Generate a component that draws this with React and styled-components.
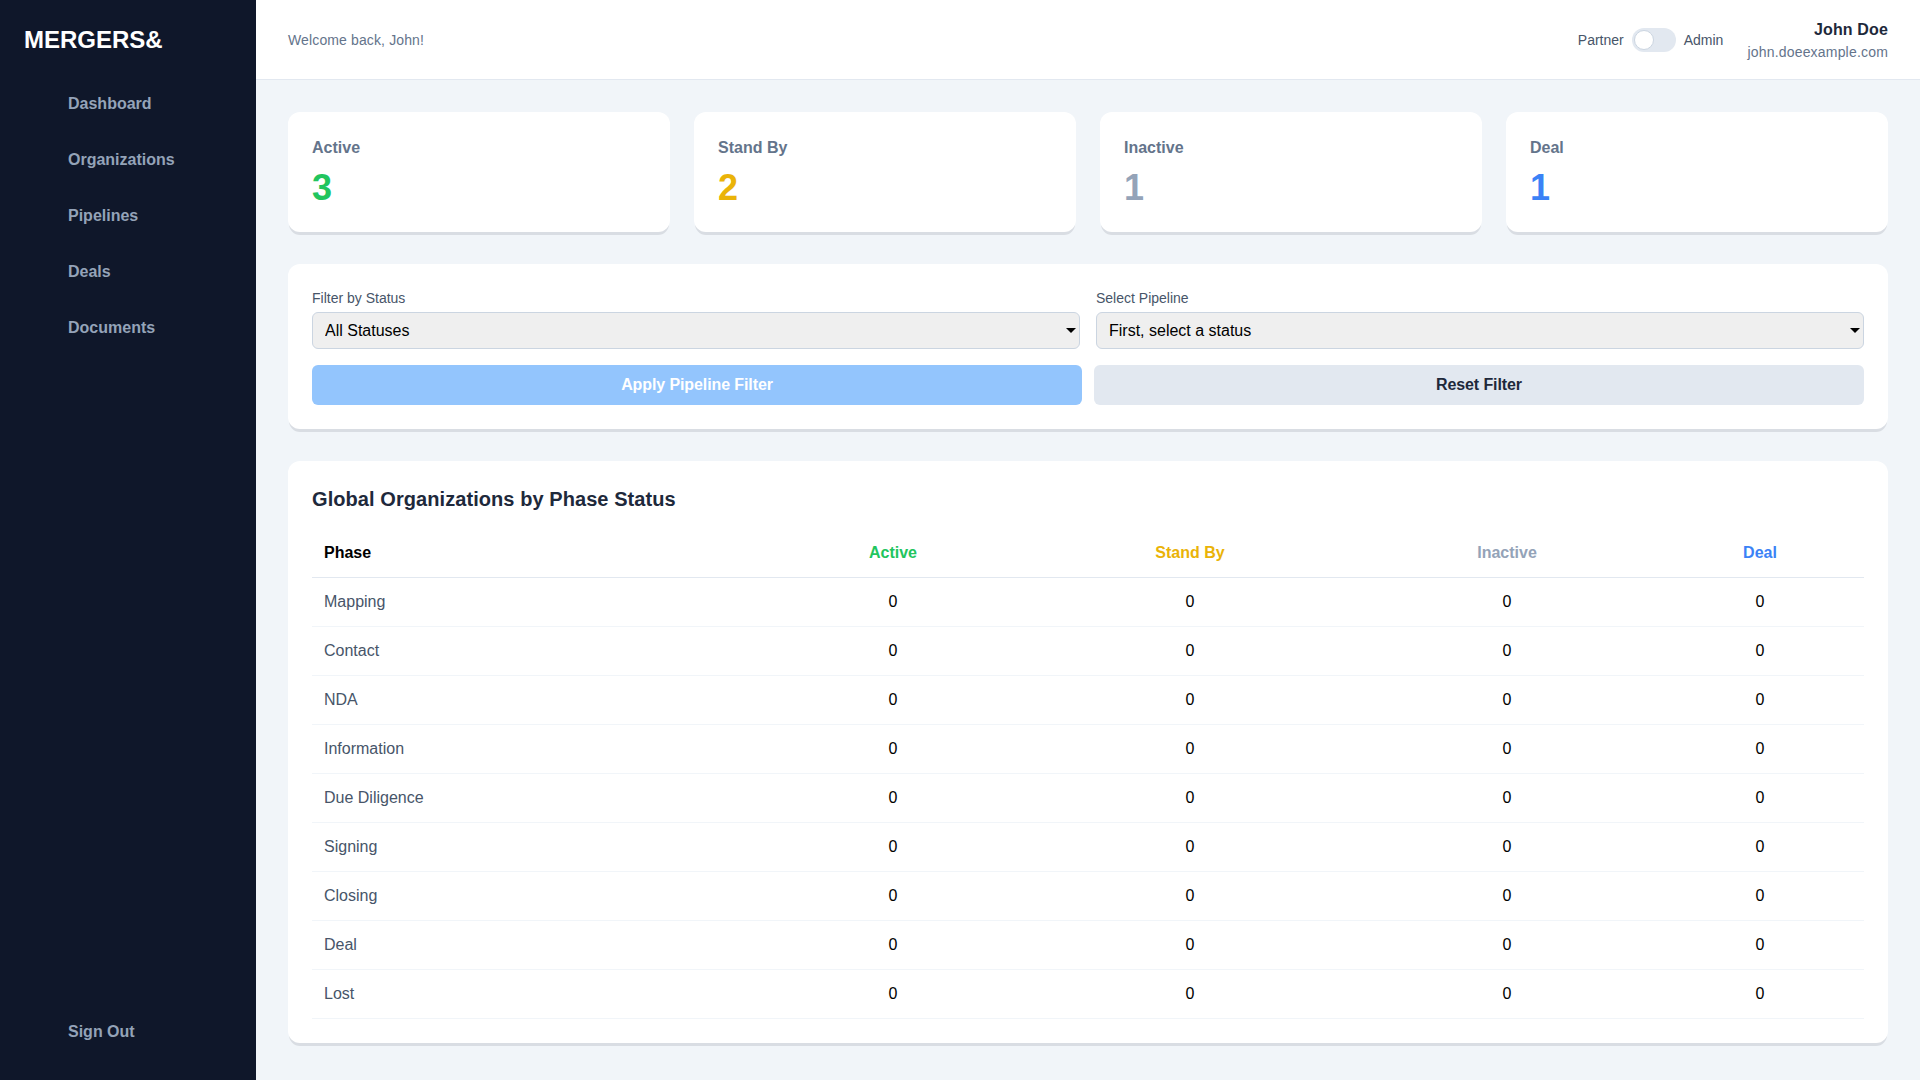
import styled, { createGlobalStyle } from "styled-components";

const GlobalStyle = createGlobalStyle`
  * {
    box-sizing: border-box;
  }

  body {
    margin: 0;
    background: #f1f5f9;
    font-family: "Liberation Sans", Arial, sans-serif;
  }
`

const Layout = styled.div`
  display: flex;
  height: 1080px;
  overflow: hidden;
`

const Sidebar = styled.aside`
  display: flex;
  flex-direction: column;
  flex: 0 0 256px;
  padding: 24px;
  background: #0f172a;
`

const Logo = styled.div`
  margin-bottom: 24px;
  color: #fff;
  font-size: 24px;
  font-weight: 700;
  line-height: 32px;
`

const Nav = styled.nav`
  display: flex;
  flex-direction: column;
  flex: 1;
  gap: 8px;
`

const NavItem = styled.a`
  padding: 12px 16px 12px 44px;
  color: #94a3b8;
  font-size: 16px;
  font-weight: 700;
  line-height: 24px;
`

const Main = styled.div`
  display: flex;
  flex-direction: column;
  flex: 1;
  min-width: 0;
`

const Header = styled.header`
  display: flex;
  align-items: center;
  justify-content: space-between;
  height: 80px;
  padding: 0 32px;
  background: #fff;
  border-bottom: 1px solid #e2e8f0;
`

const Welcome = styled.span`
  color: #64748b;
  font-size: 14px;
  letter-spacing: 0.13px;
`

const HeaderRight = styled.div`
  display: flex;
  align-items: center;
  gap: 24px;
`

const RoleSwitch = styled.div`
  display: flex;
  align-items: center;
  gap: 8px;
  color: #475569;
  font-size: 14px;
`

const Track = styled.span`
  display: flex;
  align-items: center;
  width: 44px;
  height: 24px;
  padding: 2px;
  background: #e2e8f0;
  border-radius: 12px;
`

const Knob = styled.span`
  width: 20px;
  height: 20px;
  background: #fff;
  border: 1px solid #cbd5e1;
  border-radius: 50%;
`

const User = styled.div`
  text-align: right;
`

const UserName = styled.div`
  color: #1e293b;
  font-size: 16px;
  font-weight: 700;
  line-height: 24px;
  letter-spacing: 0.15px;
`

const UserEmail = styled.div`
  color: #64748b;
  font-size: 14px;
  line-height: 20px;
  letter-spacing: 0.19px;
`

const Content = styled.main`
  display: flex;
  flex-direction: column;
  gap: 32px;
  padding: 32px;
`

const StatGrid = styled.div`
  display: grid;
  grid-template-columns: repeat(4, 1fr);
  gap: 24px;
`

const Card = styled.section`
  padding: 24px;
  background: #fff;
  border-radius: 12px;
  box-shadow: 0 4px 0 -1px #d9dde3;
`

const StatLabel = styled.div`
  color: #64748b;
  font-size: 16px;
  font-weight: 700;
  line-height: 24px;
`

const StatValue = styled.div`
  margin-top: 8px;
  color: ${(props) => props.$color};
  font-size: 36px;
  font-weight: 700;
  line-height: 40px;
`

const FilterGrid = styled.div`
  display: grid;
  grid-template-columns: 1fr 1fr;
  gap: 16px;
  margin-bottom: 16px;
`

const FieldLabel = styled.label`
  display: block;
  margin-bottom: 4px;
  color: #475569;
  font-size: 14px;
  line-height: 20px;
`

const SelectWrap = styled.div`
  position: relative;

  &::after {
    content: "";
    position: absolute;
    top: 16px;
    right: 4px;
    border-top: 5px solid #000;
    border-left: 5px solid transparent;
    border-right: 5px solid transparent;
    pointer-events: none;
  }
`

const Select = styled.select`
  display: block;
  width: 100%;
  height: 37px;
  padding: 8px 12px;
  color: #000;
  background-color: #efefef;
  border: 1px solid #cbd5e1;
  border-radius: 6px;
  font-family: inherit;
  font-size: 16px;
  appearance: none;
`

const ButtonRow = styled.div`
  display: flex;
  gap: 12px;
`

const Button = styled.button`
  flex: 1;
  height: 40px;
  color: ${(props) => (props.$primary ? "#fff" : "#1e293b")};
  background: ${(props) => (props.$primary ? "#93c5fd" : "#e2e8f0")};
  border: 0;
  border-radius: 6px;
  font-family: inherit;
  font-size: 16px;
  font-weight: 700;
  letter-spacing: -0.1px;
`

const CardTitle = styled.h2`
  margin: 0 0 16px;
  color: #1e293b;
  font-size: 20px;
  font-weight: 700;
  line-height: 28px;
  letter-spacing: 0.07px;
`

const Table = styled.table`
  width: 100%;
  border-collapse: collapse;
  table-layout: fixed;
`

const HeadCell = styled.th`
  width: ${(props) => props.$width}px;
  padding: 12px;
  color: ${(props) => props.$color || "#000"};
  border-bottom: 1px solid #e2e8f0;
  font-size: 16px;
  font-weight: 700;
  line-height: 24px;
  text-align: ${(props) => (props.$color ? "center" : "left")};
`

const PhaseCell = styled.td`
  padding: 12px;
  color: #475569;
  border-bottom: 1px solid #f1f5f9;
  font-size: 16px;
  line-height: 24px;
`

const CountCell = styled.td`
  padding: 12px;
  color: #000;
  border-bottom: 1px solid #f1f5f9;
  font-size: 16px;
  line-height: 24px;
  text-align: center;
`

const navItems = ["Dashboard", "Organizations", "Pipelines", "Deals", "Documents"];

const stats = [
  { label: "Active", value: 3, color: "#22c55e", width: 258 },
  { label: "Stand By", value: 2, color: "#eab308", width: 336 },
  { label: "Inactive", value: 1, color: "#94a3b8", width: 298 },
  { label: "Deal", value: 1, color: "#3b82f6", width: 208 },
];

const phases = ["Mapping", "Contact", "NDA", "Information", "Due Diligence", "Signing", "Closing", "Deal", "Lost"];

function App() {
  return (
    <Layout>
      <GlobalStyle />
      <Sidebar>
        <Logo>MERGERS&amp;</Logo>
        <Nav>
          {navItems.map((item) => (
            <NavItem key={item}>{item}</NavItem>
          ))}
        </Nav>
        <NavItem>Sign Out</NavItem>
      </Sidebar>

      <Main>
        <Header>
          <Welcome>Welcome back, John!</Welcome>
          <HeaderRight>
            <RoleSwitch>
              Partner
              <Track><Knob /></Track>
              Admin
            </RoleSwitch>
            <User>
              <UserName>John Doe</UserName>
              <UserEmail>john.doeexample.com</UserEmail>
            </User>
          </HeaderRight>
        </Header>

        <Content>
          <StatGrid>
            {stats.map((stat) => (
              <Card key={stat.label}>
                <StatLabel>{stat.label}</StatLabel>
                <StatValue $color={stat.color}>{stat.value}</StatValue>
              </Card>
            ))}
          </StatGrid>

          <Card>
            <FilterGrid>
              <div>
                <FieldLabel>Filter by Status</FieldLabel>
                <SelectWrap>
                  <Select defaultValue="all">
                    <option value="all">All Statuses</option>
                  </Select>
                </SelectWrap>
              </div>
              <div>
                <FieldLabel>Select Pipeline</FieldLabel>
                <SelectWrap>
                  <Select defaultValue="none">
                    <option value="none">First, select a status</option>
                  </Select>
                </SelectWrap>
              </div>
            </FilterGrid>
            <ButtonRow>
              <Button $primary>Apply Pipeline Filter</Button>
              <Button>Reset Filter</Button>
            </ButtonRow>
          </Card>

          <Card>
            <CardTitle>Global Organizations by Phase Status</CardTitle>
            <Table>
              <thead>
                <tr>
                  <HeadCell $width={452}>Phase</HeadCell>
                  {stats.map((stat) => (
                    <HeadCell key={stat.label} $color={stat.color} $width={stat.width}>{stat.label}</HeadCell>
                  ))}
                </tr>
              </thead>
              <tbody>
                {phases.map((phase) => (
                  <tr key={phase}>
                    <PhaseCell>{phase}</PhaseCell>
                    {stats.map((stat) => (
                      <CountCell key={stat.label}>0</CountCell>
                    ))}
                  </tr>
                ))}
              </tbody>
            </Table>
          </Card>
        </Content>
      </Main>
    </Layout>
  );
}

export default App;
